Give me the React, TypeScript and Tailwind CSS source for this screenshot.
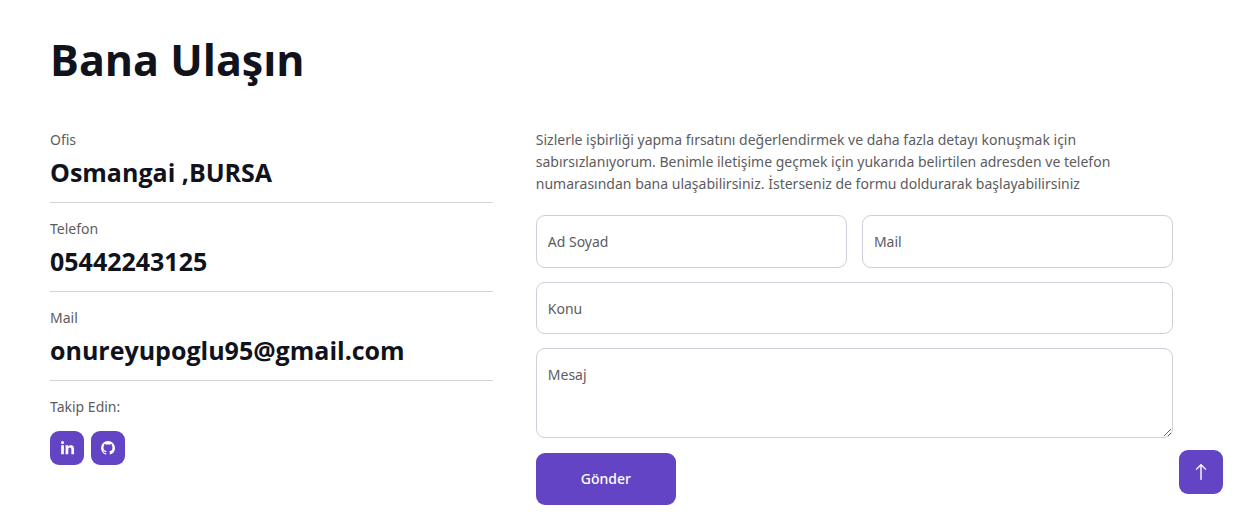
import { BsArrowUp } from "react-icons/bs";
import { FaLinkedinIn } from "react-icons/fa";
import { VscGithubInverted } from "react-icons/vsc";

const details = [
  { label: "Ofis", value: "Osmangai ,BURSA" },
  { label: "Telefon", value: "05442243125" },
  { label: "Mail", value: "onureyupoglu95@gmail.com" },
];

const field =
  "block w-full rounded-[9px] border border-[#ced0d9] bg-white px-[11px] text-sm leading-[22px] text-[#5c5c5e] placeholder:text-[#5c5c5e] placeholder:opacity-100 outline-none focus:border-[#6244c5]";

const iconLink =
  "flex size-[34px] items-center justify-center rounded-[9px] bg-[#6244c5] text-white";

export default function App() {
  return (
    <main className="bg-white px-[50px] pt-[34px] pb-[22px] font-['Noto_Sans','Open_Sans',sans-serif] text-sm leading-[22px] text-[#5c5c5e]">
      <h2 className="font-['Open_Sans',sans-serif] text-[43px] leading-[52px] font-bold text-[#10121c]">
        Bana Ulaşın
      </h2>
      <div className="mt-[43px] grid grid-cols-[41fr_59fr] gap-[43px] pr-[14px]">
        <section>
          {details.map((d) => (
            <div key={d.label} className="mb-[15px] border-b border-[#d3d3d6] pb-[14px]">
              <p>{d.label}</p>
              <p className="mt-[5px] font-['Open_Sans',sans-serif] text-[25px] leading-8 font-bold text-[#10121c]">
                {d.value}
              </p>
            </div>
          ))}
          <p>Takip Edin:</p>
          <div className="mt-[13px] flex gap-[7px]">
            <a href="#linkedin" aria-label="LinkedIn" className={iconLink}>
              <FaLinkedinIn size={15} />
            </a>
            <a href="#github" aria-label="GitHub" className={iconLink}>
              <VscGithubInverted size={14} />
            </a>
          </div>
        </section>
        <form className="min-w-0" onSubmit={(e) => e.preventDefault()}>
          <p>
            Sizlerle işbirliği yapma fırsatını değerlendirmek ve daha fazla detayı konuşmak için
            sabırsızlanıyorum. Benimle iletişime geçmek için yukarıda belirtilen adresden ve telefon
            numarasından bana ulaşabilirsiniz. İsterseniz de formu doldurarak başlayabilirsiniz
          </p>
          <div className="mt-[20px] grid grid-cols-2 gap-x-[15px] gap-y-[14px]">
            <input aria-label="Ad Soyad" placeholder="Ad Soyad" className={`${field} h-[53px]`} />
            <input aria-label="Mail" type="email" placeholder="Mail" className={`${field} h-[53px]`} />
            <input aria-label="Konu" placeholder="Konu" className={`${field} col-span-2 h-[52px]`} />
            <textarea
              aria-label="Mesaj"
              placeholder="Mesaj"
              className={`${field} col-span-2 h-[90px] resize-y py-[15px]`}
            />
          </div>
          <button
            type="submit"
            className="mt-[15px] h-[52px] min-w-[140px] cursor-pointer rounded-[9px] bg-[#6244c5] px-10 font-medium text-white"
          >
            Gönder
          </button>
        </form>
      </div>
      <a
        href="#top"
        aria-label="Yukarı"
        className="fixed right-[14px] bottom-[33px] flex size-11 items-center justify-center rounded-[9px] bg-[#6244c5] text-white"
      >
        <BsArrowUp size={18} stroke="currentColor" strokeWidth={0.3} />
      </a>
    </main>
  );
}
